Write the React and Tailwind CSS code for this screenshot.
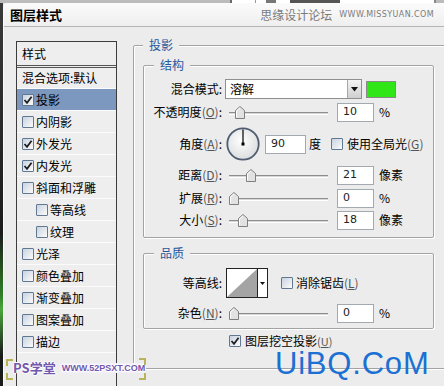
import React from "react";

const Check = ({ checked }) => (
  <span className="w-[12px] h-[12px] shrink-0 flex items-center justify-center border border-[#607892] rounded-[1px] bg-linear-to-br from-[#c9d3df] to-[#fbfbfb]">
    {checked && (
      <svg width="10" height="10" viewBox="0 0 10 10">
        <path d="M1.5 5 L4 7.8 L8.6 1.8" stroke="#1c1c1c" strokeWidth="1.7" fill="none" />
      </svg>
    )}
  </span>
);

const Lbl = ({ text, k }) => (
  <span className="w-[78px] shrink-0 text-right whitespace-nowrap">
    {text}
    {k && (
      <span className="text-[#555]">
        (<span className="underline">{k}</span>)
      </span>
    )}
    :
  </span>
);

const Slider = ({ at }) => (
  <div className="relative w-[104px] h-[20px] shrink-0 ml-[3px]">
    <div className="absolute left-[4px] top-[10px] w-[99px] h-[3px] border-t border-[#8e8e8e] border-b border-b-white bg-[#d6d6d6]" />
    <svg className="absolute top-[4px]" style={{ left: at }} width="10" height="13" viewBox="0 0 10 13">
      <path d="M0.5 12.5V4.5L5 0.5L9.5 4.5V12.5Z" fill="#e2e2e2" stroke="#7f7f7f" />
      <path d="M1.5 11.5V5L5 1.9" stroke="#fff" fill="none" />
    </svg>
  </div>
);

const Num = ({ v, className = "w-[37px]" }) => (
  <div className={"h-[19px] shrink-0 bg-white border border-[#a2a9b1] pl-[5px] flex items-center text-[11px] font-['DejaVu_Sans',sans-serif] text-[#222] " + className}>
    {v}
  </div>
);

const SliderRow = ({ text, k, at, v, unit, className }) => (
  <div className={"h-[20px] flex items-center " + className}>
    <Lbl text={text} k={k} />
    <Slider at={at} />
    <div className="ml-[8px]">
      <Num v={v} />
    </div>
    <span className="ml-[5px]">{unit}</span>
  </div>
);

const items = [
  { t: "投影", c: true, sel: true },
  { t: "内阴影" },
  { t: "外发光", c: true },
  { t: "内发光", c: true },
  { t: "斜面和浮雕" },
  { t: "等高线", sub: true },
  { t: "纹理", sub: true },
  { t: "光泽" },
  { t: "颜色叠加" },
  { t: "渐变叠加" },
  { t: "图案叠加" },
  { t: "描边" },
];

const Corner = ({ className }) => (
  <span className={"absolute w-[7px] h-[7px] border-[#b9b35a] " + className} />
);

export default function App() {
  return (
    <div className="w-[444px] h-[386px] overflow-hidden relative flex flex-col bg-[#ececec] text-[12px] leading-[16px] text-black font-['Noto_Sans_CJK_SC','Noto_Sans',sans-serif]">
      {/* window behind the dialog */}
      <div className="h-[3px] flex shrink-0 bg-[#bcbcbc]">
        <div className="w-[230px]" />
        <div className="w-[2px] bg-[#6a6a6a]" />
        <div className="w-[23px] bg-white" />
        <div className="w-[1px] bg-[#9a9a9a]" />
        <div className="w-[10px] bg-white" />
        <div className="w-[10px] bg-[#777]" />
        <div className="w-[14px] bg-white" />
        <div className="w-[50px] bg-[#555]" />
        <div className="flex-1 bg-white" />
        <div className="w-[2px] bg-[#8a8a8a]" />
        <div className="w-[8px]" />
      </div>

      <div className="flex flex-1 min-h-0">
        <div className="w-[3px] shrink-0 bg-[linear-gradient(to_bottom,#3a3a3a_0%,#1b1b1b_60%,#2f7d25_76%,#49a83a_80%,#1a1a1a_92%)]" />

        <div className="flex-1 flex flex-col border-l border-[#fafafa] rounded-tl-[5px] overflow-hidden">
          {/* title bar */}
          <div className="h-[24px] shrink-0 flex items-center pl-[6px] pr-[10px] bg-linear-to-b from-[#fbfbfb] to-[#efefef] border-b border-[#b5b5b5]">
            <span className="text-[13px] font-bold">图层样式</span>
            <span className="ml-auto text-[12px] text-[#7b7b7b]">思缘设计论坛</span>
            <span className="ml-[7px] text-[8px] tracking-[0.4px] text-[#7b7b7b] font-['DejaVu_Sans',sans-serif]">WWW.MISSYUAN.COM</span>
          </div>

          {/* body */}
          <div className="flex-1 flex items-start pl-[12px] min-h-0">
            {/* style list */}
            <div className="self-stretch mt-[14px] w-[101px] shrink-0 border border-b-0 border-[#3c3c3c] bg-[#eeeeee]">
              <div className="h-[26px] pl-[5px] flex items-center border-b-[3px] border-double border-[#555]">样式</div>
              <div className="h-[21px] pl-[5px] flex items-center border-b border-[#fbfbfb]">混合选项:默认</div>
              {items.map((it) => (
                <div
                  key={it.t}
                  className={
                    "h-[22px] flex items-center gap-[2px] border-b border-[#fbfbfb] " +
                    (it.sub ? "pl-[19px] " : "pl-[5px] ") +
                    (it.sel ? "bg-[#7c98bf]" : "")
                  }
                >
                  <Check checked={it.c} />
                  <span>{it.t}</span>
                </div>
              ))}
            </div>

            {/* settings */}
            <div className="ml-[16px] mt-[10px] w-[320px] shrink-0">
              <fieldset className="border border-[#a3a3a3] rounded-[2px] pl-[9px] pt-[4px] pb-[20px] shadow-[inset_1px_1px_0_#fff,1px_1px_0_#fff]">
                <legend className="px-[6px] bg-[#ececec] text-[#24579b]">投影</legend>

                <fieldset className="w-[291px] border border-[#a3a3a3] rounded-[2px] pt-[6px] pb-[7px] shadow-[inset_1px_1px_0_#fff,1px_1px_0_#fff]">
                  <legend className="ml-[10px] px-[6px] bg-[#ececec] text-[#24579b]">结构</legend>

                  <div className="h-[20px] flex items-center">
                    <Lbl text="混合模式" />
                    <div className="ml-[3px] w-[137px] h-[20px] flex bg-white border border-[#8f8f8f]">
                      <span className="flex-1 pl-[4px] flex items-center">溶解</span>
                      <span className="w-[14px] flex items-center justify-center border-l border-[#a8a8a8] bg-linear-to-b from-[#f4f4f4] to-[#cfcfcf]">
                        <svg width="7" height="5" viewBox="0 0 7 5">
                          <path d="M0 0H7L3.5 4.5Z" fill="#111" />
                        </svg>
                      </span>
                    </div>
                    <span className="ml-[4px] w-[30px] h-[17px] border border-[#8a8a8a] bg-[#31e617]" />
                  </div>

                  <SliderRow className="mt-[3px]" text="不透明度" k="O" at={10} v="10" unit="%" />

                  <div className="h-[34px] mt-[5px] flex items-center">
                    <Lbl text="角度" k="A" />
                    <svg className="ml-[4px] shrink-0" width="34" height="34" viewBox="0 0 34 34">
                      <defs>
                        <radialGradient id="dial" cx="45%" cy="40%" r="65%">
                          <stop offset="0" stopColor="#ffffff" />
                          <stop offset="1" stopColor="#d9dadc" />
                        </radialGradient>
                      </defs>
                      <circle cx="17" cy="17" r="15.7" fill="url(#dial)" stroke="#4e5d70" strokeWidth="1.8" />
                      <line x1="17" y1="17" x2="17" y2="2.5" stroke="#000" strokeWidth="1.2" />
                      <rect x="15.5" y="15.5" width="3" height="3" fill="#000" />
                    </svg>
                    <div className="ml-[5px]">
                      <Num v="90" className="w-[41px]" />
                    </div>
                    <span className="ml-[3px]">度</span>
                    <span className="ml-[10px]">
                      <Check />
                    </span>
                    <span className="ml-[4px] whitespace-nowrap">
                      使用全局光<span className="text-[#555]">(<span className="underline">G</span>)</span>
                    </span>
                  </div>

                  <SliderRow className="mt-[4px]" text="距离" k="D" at={21} v="21" unit="像素" />
                  <SliderRow className="mt-[3px]" text="扩展" k="R" at={4} v="0" unit="%" />
                  <SliderRow className="mt-[2px]" text="大小" k="S" at={13} v="18" unit="像素" />
                </fieldset>

                <fieldset className="mt-[7px] w-[291px] border border-[#a3a3a3] rounded-[2px] pt-[7px] pb-[5px] shadow-[inset_1px_1px_0_#fff,1px_1px_0_#fff]">
                  <legend className="ml-[10px] px-[6px] bg-[#ececec] text-[#24579b]">品质</legend>

                  <div className="h-[30px] flex items-center">
                    <Lbl text="等高线" />
                    <div className="ml-[4px] w-[42px] h-[30px] flex bg-white border border-[#222]">
                      <svg width="30" height="28" viewBox="0 0 30 28" className="shrink-0">
                        <polygon points="0,28 30,0 30,28" fill="#a4a4a4" />
                      </svg>
                      <span className="flex-1 flex items-center justify-center border-l border-[#222]">
                        <svg width="5" height="3" viewBox="0 0 5 3">
                          <path d="M0 0H5L2.5 3Z" fill="#111" />
                        </svg>
                      </span>
                    </div>
                    <span className="ml-[13px]">
                      <Check />
                    </span>
                    <span className="ml-[3px] whitespace-nowrap">
                      消除锯齿<span className="text-[#555]">(<span className="underline">L</span>)</span>
                    </span>
                  </div>

                  <SliderRow className="mt-[5px]" text="杂色" k="N" at={4} v="0" unit="%" />
                </fieldset>

                <div className="mt-[5px] h-[14px] ml-[86px] flex items-center gap-[4px] leading-[14px]">
                  <Check checked />
                  <span className="whitespace-nowrap">图层挖空投影</span>
                  <span className="-ml-[4px] flex text-[#555] text-[11px]">
                    <span>(</span>
                    <span className="underline">U</span>
                    <span>)</span>
                  </span>
                </div>
              </fieldset>
            </div>
          </div>
        </div>
      </div>

      {/* watermarks */}
      <div className="absolute left-[275px] top-[352px] text-[31px] leading-[24px] tracking-[0.8px] text-[#1c70d3] font-['Liberation_Sans',sans-serif]">
        UiBQ.CoM
      </div>
      <div className="absolute left-[13px] top-[360px] flex items-center gap-[5px] [text-shadow:1px_0_0_#fff,-1px_0_0_#fff,0_1px_0_#fff,0_-1px_0_#fff]">
        <span className="text-[13px] font-bold text-[#7257ad]">PS学堂</span>
        <span className="text-[9px] font-bold leading-[10px] text-[#7257ad] font-['Liberation_Sans',sans-serif] bg-[#f4f0fa] px-[1px]">WWW.52PSXT.COM</span>
      </div>
      <Corner className="left-[6px] top-[359px] border-l-2 border-t-2" />
      <Corner className="left-[6px] top-[373px] border-l-2 border-b-2" />
      <Corner className="left-[139px] top-[358px] border-r-2 border-t-2" />
      <Corner className="left-[139px] top-[373px] border-r-2 border-b-2" />
    </div>
  );
}
